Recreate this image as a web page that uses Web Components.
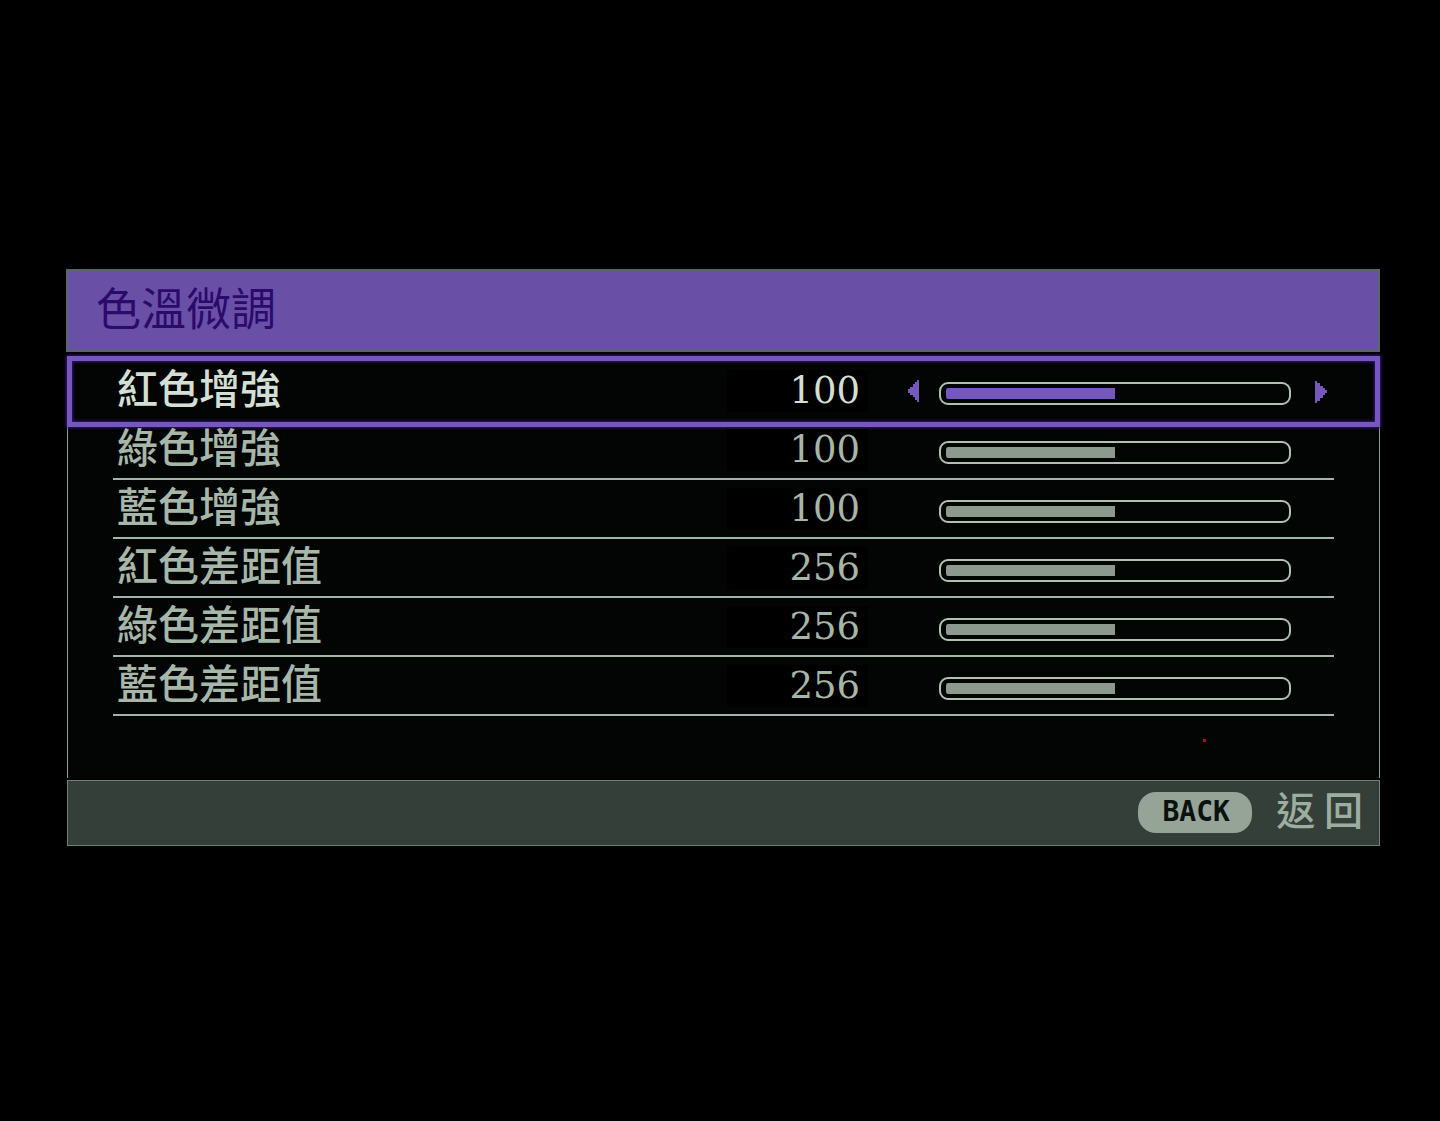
<!DOCTYPE html>
<html lang="zh-Hant">
<head>
<meta charset="utf-8">
<meta name="viewport" content="width=device-width, initial-scale=1">
<title>色溫微調</title>
<style>
  :root {
    --violet: #6950a6;
    --violet-edge: #7657bd;
    --ink: #d3dfd3;
    --ink-dim: #a6b6a8;
    --fill: #8b9a8d;
    --edge: #566a63;
    --panel: #020504;
  }
  body {
    margin: 0;
    min-height: 100vh;
    background: #000;
    color: var(--ink-dim);
    font-family: "Noto Sans CJK TC", "Noto Sans", sans-serif;
  }
</style>
</head>
<body>
<osd-screen>
  <osd-panel>
    <span slot="title">色溫微調</span>
    <osd-row value="100" max="200" selected>紅色增強</osd-row>
    <osd-row value="100" max="200">綠色增強</osd-row>
    <osd-row value="100" max="200">藍色增強</osd-row>
    <osd-row value="256" max="512">紅色差距值</osd-row>
    <osd-row value="256" max="512">綠色差距值</osd-row>
    <osd-row value="256" max="512">藍色差距值</osd-row>
    <osd-key slot="footer" key="BACK">返 回</osd-key>
  </osd-panel>
</osd-screen>

<script>
class OsdScreen extends HTMLElement {
  constructor() {
    super();
    this.attachShadow({ mode: "open" }).innerHTML = `
      <style>
        :host { display: block; padding: 269px 60px 40px 66px; }
      </style>
      <slot></slot>`;
  }
}

class OsdPanel extends HTMLElement {
  constructor() {
    super();
    this.attachShadow({ mode: "open" }).innerHTML = `
      <style>
        :host { display: block; }
        header {
          box-sizing: border-box;
          height: 83px;
          display: flex;
          align-items: center;
          padding: 0 28px 8px;
          border: 2px solid var(--edge);
          background: var(--violet);
        }
        h1 {
          margin: 0;
          color: #2b0a6b;
          font-size: 45px;
          line-height: 45px;
          font-weight: 400;
        }
        main {
          position: relative;
          margin: 4px 0 2px 1px;
          padding-bottom: 62px;
          background:
            linear-gradient(#8ba095, #8ba095) left / 1px 100% no-repeat,
            linear-gradient(#8ba095, #8ba095) right / 1px 100% no-repeat,
            var(--panel);
        }
        .dot {
          position: absolute;
          right: 174px;
          bottom: 36px;
          width: 3px;
          height: 3px;
          background: #a5101c;
        }
        footer {
          box-sizing: border-box;
          height: 66px;
          margin-left: 1px;
          display: flex;
          align-items: center;
          justify-content: flex-end;
          padding: 0 16px 2px;
          border: 1px solid #6c8376;
          background: #343f39;
        }
      </style>
      <header><h1><slot name="title"></slot></h1></header>
      <main><slot></slot><i class="dot"></i></main>
      <footer><slot name="footer"></slot></footer>`;
  }
}

class OsdRow extends HTMLElement {
  constructor() {
    super();
    this.attachShadow({ mode: "open" }).innerHTML = `
      <style>
        :host {
          box-sizing: border-box;
          display: block;
          height: 59px;
          margin: 0 46px;
          border-bottom: 2px solid #a3b5a6;
          color: var(--ink-dim);
          --bar: var(--fill);
        }
        :host([selected]) {
          height: 71px;
          margin: 0 0 -6px;
          padding: 0 41px 2px;
          border: 5px solid var(--violet-edge);
          color: var(--ink);
          box-shadow: 0 0 3px 1px #35177a, inset 0 0 3px 1px #35177a;
          --bar: var(--violet-edge);
        }
        .row {
          height: 100%;
          display: grid;
          grid-template-columns: 1fr 141px 71px 352px 43px;
          align-items: center;
        }
        label {
          padding: 0 0 8px 4px;
          font-size: 41px;
          line-height: 41px;
          font-weight: 500;
          white-space: nowrap;
        }
        output {
          box-sizing: border-box;
          padding: 0 8px;
          background: #000;
          font: 37px/42px "DejaVu Serif", serif;
          text-align: right;
        }
        input {
          appearance: none;
          box-sizing: border-box;
          width: 100%;
          height: 23px;
          margin: 6px 0 0;
          padding: 4px 5px;
          border: 2px solid #b0c1b0;
          border-radius: 9px;
          background: linear-gradient(to right, var(--bar) var(--level), transparent var(--level)) content-box no-repeat;
        }
        input::-webkit-slider-thumb { appearance: none; width: 1px; height: 1px; background: none; }
        button {
          display: flex;
          margin: 0;
          padding: 0;
          border: 0;
          background: none;
          visibility: hidden;
        }
        :host([selected]) button { visibility: visible; }
        .less { margin-left: 40px; }
        .more { margin: 3px 0 0 24px; }
        svg { display: block; fill: var(--violet-edge); }
      </style>
      <div class="row">
        <label for="level"><slot></slot></label>
        <output for="level"></output>
        <button class="less" type="button" aria-label="−"><svg width="11" height="22" viewBox="0 0 11 22"><path d="M11 0V22H9V20H7V17H5V15H2V13H0V9H2V7H5V4H7V2H9V0Z"/></svg></button>
        <input id="level" type="range" min="0">
        <button class="more" type="button" aria-label="+"><svg width="12" height="22" viewBox="0 0 12 22"><path d="M0 0V22H2V20H5V17H8V14H10V12H12V9H10V7H8V5H5V2H2V0Z"/></svg></button>
      </div>`;
  }
  connectedCallback() {
    const input = this.shadowRoot.querySelector("input");
    const output = this.shadowRoot.querySelector("output");
    input.max = this.getAttribute("max");
    input.value = this.getAttribute("value");
    const sync = () => {
      output.textContent = input.value;
      input.style.setProperty("--level", input.value / input.max * 100 + "%");
    };
    input.addEventListener("input", sync);
    const step = (by) => () => { input.value = Number(input.value) + by; sync(); };
    this.shadowRoot.querySelector(".less").addEventListener("click", step(-1));
    this.shadowRoot.querySelector(".more").addEventListener("click", step(1));
    sync();
  }
}

class OsdKey extends HTMLElement {
  constructor() {
    super();
    this.attachShadow({ mode: "open" }).innerHTML = `
      <style>
        :host { display: flex; align-items: center; gap: 24px; }
        button {
          width: 114px;
          height: 41px;
          margin: 0;
          padding: 0 0 0 2px;
          border: 0;
          border-radius: 18px;
          background: #95a497;
          color: #0b110e;
          font: bold 28px/38px "DejaVu Sans Mono", monospace;
        }
        span {
          padding-bottom: 8px;
          font-size: 39px;
          line-height: 41px;
          font-weight: 500;
          white-space: nowrap;
          color: #9dad9f;
        }
      </style>
      <button type="button" aria-describedby="name"></button>
      <span id="name"><slot></slot></span>`;
  }
  connectedCallback() {
    this.shadowRoot.querySelector("button").textContent = this.getAttribute("key");
  }
}

customElements.define("osd-screen", OsdScreen);
customElements.define("osd-panel", OsdPanel);
customElements.define("osd-row", OsdRow);
customElements.define("osd-key", OsdKey);
</script>
</body>
</html>
